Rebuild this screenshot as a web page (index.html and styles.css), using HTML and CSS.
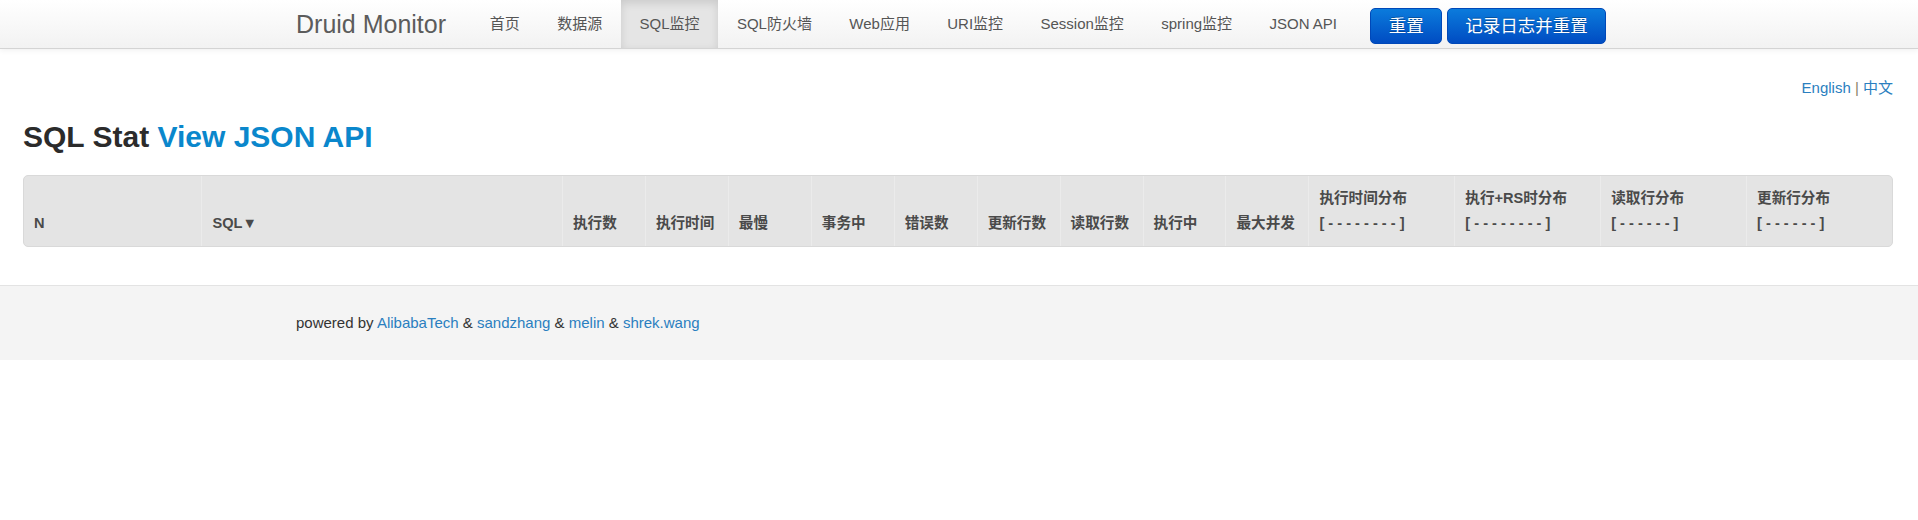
FILE: index.html
```html
<!DOCTYPE html>
<html lang="zh-CN">
<head>
<meta charset="utf-8">
<title>Druid Monitor - SQL监控</title>
<link rel="stylesheet" href="styles.css">
</head>
<body>
<header class="navbar">
  <div class="nav-inner">
    <a class="brand" href="#">Druid Monitor</a>
    <ul class="nav">
      <li><a href="#">首页</a></li>
      <li><a href="#">数据源</a></li>
      <li class="active"><a href="#">SQL监控</a></li>
      <li><a href="#">SQL防火墙</a></li>
      <li><a href="#">Web应用</a></li>
      <li><a href="#">URI监控</a></li>
      <li><a href="#">Session监控</a></li>
      <li><a href="#">spring监控</a></li>
      <li><a href="#">JSON API</a></li>
    </ul>
    <div class="actions">
      <button class="btn" type="button">重置</button>
      <button class="btn" type="button">记录日志并重置</button>
    </div>
  </div>
</header>

<main class="content">
  <div class="lang"><a href="#">English</a> | <a href="#">中文</a></div>
  <h3 class="title">SQL Stat <a href="#">View JSON API</a></h3>
  <table class="stat-table">
    <thead>
      <tr>
        <th class="col-n">N</th>
        <th class="col-sql">SQL▼</th>
        <th class="col-s">执行数</th>
        <th class="col-s">执行时间</th>
        <th class="col-s">最慢</th>
        <th class="col-s">事务中</th>
        <th class="col-s">错误数</th>
        <th class="col-s">更新行数</th>
        <th class="col-s">读取行数</th>
        <th class="col-s">执行中</th>
        <th class="col-s">最大并发</th>
        <th class="col-d">执行时间分布<br>[ - - - - - - - - ]</th>
        <th class="col-d">执行+RS时分布<br>[ - - - - - - - - ]</th>
        <th class="col-d">读取行分布<br>[ - - - - - - ]</th>
        <th class="col-d">更新行分布<br>[ - - - - - - ]</th>
      </tr>
    </thead>
    <tbody></tbody>
  </table>
</main>

<footer class="footer">
  <div class="footer-inner">powered by <a href="#">AlibabaTech</a> &amp; <a href="#">sandzhang</a> &amp; <a href="#">melin</a> &amp; <a href="#">shrek.wang</a></div>
</footer>
</body>
</html>
```

FILE: styles.css
```css
* {
  box-sizing: border-box;
}

body {
  margin: 0;
  font-family: "Liberation Sans", "Noto Sans CJK SC", sans-serif;
  color: #333;
  background: #fff;
}

a {
  text-decoration: none;
}

/* ---------- navbar ---------- */
.navbar {
  height: 49px;
  background: linear-gradient(#ffffff, #f2f2f2);
  border-bottom: 1px solid #d4d4d4;
  box-shadow: 0 1px 6px rgba(0, 0, 0, 0.07);
}

.nav-inner {
  width: 1326px;
  height: 48px;
  margin: 0 auto;
  display: flex;
}

.brand {
  font-size: 25px;
  line-height: 48px;
  color: #5c5c5c;
  padding-right: 25px;
}

.nav {
  list-style: none;
  margin: 0;
  padding: 0;
  display: flex;
}

.nav a {
  display: block;
  padding: 0 18.7px;
  line-height: 48px;
  font-size: 15px;
  color: #555;
}

.nav .active a {
  background: #e5e5e5;
  box-shadow: inset 0 3px 8px rgba(0, 0, 0, 0.12);
}

.actions {
  display: flex;
  gap: 4.5px;
  margin: 8px 0 0 14.5px;
  align-self: flex-start;
}

.btn {
  height: 36px;
  padding: 0 17.5px;
  font-family: "Liberation Sans", "Noto Sans CJK SC", sans-serif;
  font-size: 17.5px;
  line-height: 34px;
  color: #fff;
  background: linear-gradient(#0b7bdc, #004cc2);
  border: 1px solid #0048b8;
  border-radius: 5px;
  text-shadow: 0 -1px 0 rgba(0, 0, 0, 0.25);
  cursor: pointer;
}

/* ---------- content ---------- */
.content {
  padding: 0 25px 0 23px;
}

.lang {
  text-align: right;
  font-size: 15px;
  line-height: 24px;
  margin-top: 27px;
  color: #8a7f6a;
}

.lang a {
  color: #2a7fc0;
}

.title {
  font-size: 30px;
  line-height: 36px;
  font-weight: bold;
  color: #2b2b2b;
  margin: 19px 0 20px 0;
}

.title a {
  color: #0a87cc;
}

.stat-table {
  width: 100%;
  table-layout: fixed;
  border-collapse: separate;
  border-spacing: 0;
  border: 1px solid #d9d9d9;
  border-radius: 5px;
  background: #e4e4e4;
}

.stat-table th {
  text-align: left;
  vertical-align: bottom;
  white-space: nowrap;
  font-size: 14.6px;
  line-height: 25px;
  font-weight: bold;
  color: #4a4a4a;
  padding: 10px 10px 10px;
  border-left: 1px solid #ebebeb;
}

.stat-table th:first-child {
  border-left: 0;
}

.col-n { width: 9.5%; }
.col-sql { width: 19.3%; }
.col-s { width: 4.44%; }
.col-d { width: 7.81%; }

/* ---------- footer ---------- */
.footer {
  margin-top: 38px;
  border-top: 1px solid #e3e3e3;
  background: #f4f4f4;
  padding: 25px 0;
}

.footer-inner {
  width: 1326px;
  margin: 0 auto;
  font-size: 15px;
  line-height: 24px;
  color: #333;
}

.footer a {
  color: #2a7fc0;
}
```
